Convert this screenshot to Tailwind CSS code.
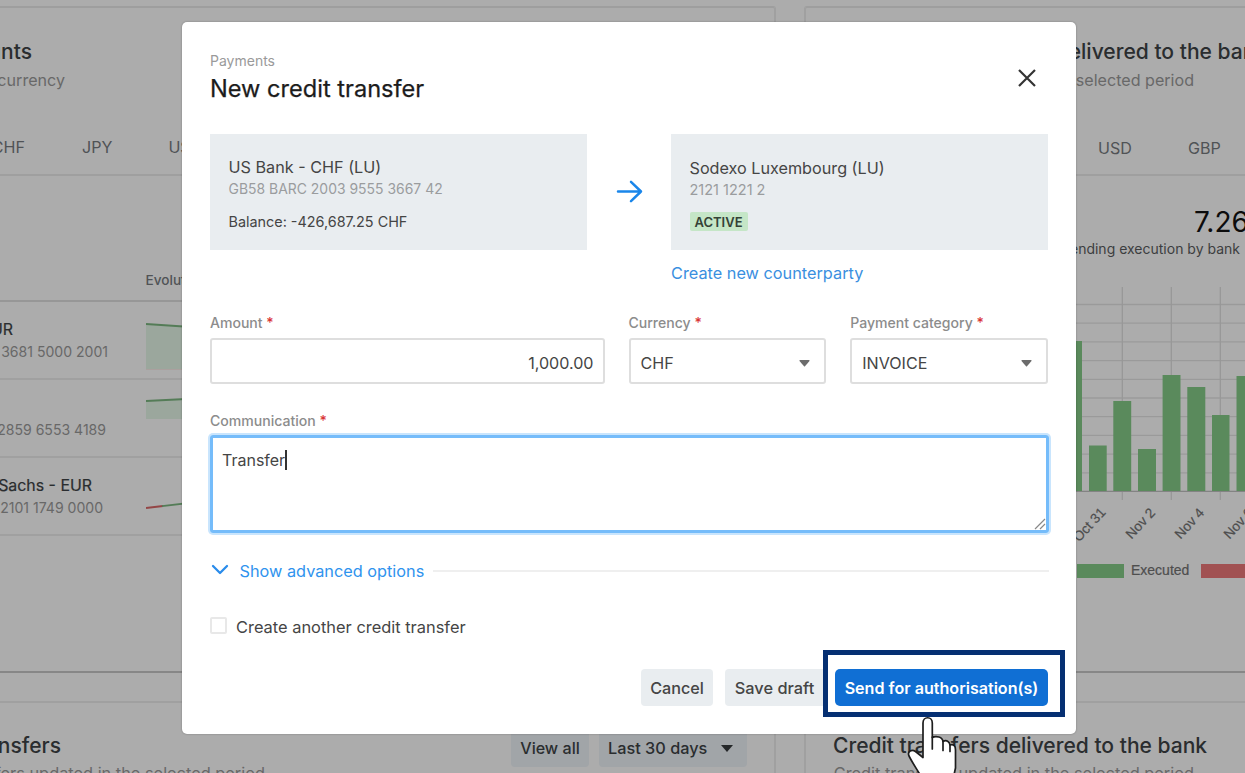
<!DOCTYPE html>
<html lang="en">
<head>
<meta charset="utf-8">
<title>New credit transfer</title>
<script src="https://cdn.jsdelivr.net/npm/@tailwindcss/browser@4"></script>
</head>
<body class="bg-[#acacac] font-['Inter','Liberation_Sans',sans-serif]">
<div class="relative w-[1245px] h-[773px] overflow-hidden bg-[#acacac] text-[#2a2d2f] text-[16.1px] whitespace-nowrap">

  <!-- Dashboard behind the dialog -->
  <main class="grid grid-cols-[776px_441px] gap-x-7 gap-y-7 pt-[6px]">

    <section class="flex h-[667px] flex-col border-t-2 border-r-2 border-b-2 border-t-[#9e9e9e] border-r-[#a0a0a0] border-b-[#878787] rounded-r-[3px]">
      <div class="mt-[30px] flex w-8 justify-end text-[21px] leading-[27px] font-medium">Accounts</div>
      <div class="mt-[3px] flex w-[65px] justify-end leading-6 text-[#686868]">Balance by currency</div>
      <div class="mt-[42px] flex h-[42px] border-b-2 border-[#9f9f9f] leading-[27px] text-[#505356]">
        <span class="flex w-[25px] justify-end">CHF</span><span class="ml-[57px]">JPY</span><span class="ml-[56px]">USD</span>
      </div>
      <div class="flex h-[126px] items-end border-b-2 border-[#979797] pb-[9px] pl-[145.5px] text-[13.6px] leading-[22px] font-medium text-[#505356]">Evolution</div>
      <div class="flex h-[78px] border-b-2 border-[#a0a0a0]">
        <div class="flex w-[146px] flex-col items-end pt-[17px] leading-[22px]"><span class="pr-[133px] text-[15.9px] [-webkit-text-stroke:0.2px_#2a2d2f]">Main account - EUR</span><span class="pr-[38px] text-[14.05px] text-[#686868]">BE12 3681 5000 2001</span></div>
        <svg class="w-[60px]" height="78" viewBox="0 0 60 78" fill="none"><path d="M0 22L60 26V67H0Z" fill="#9ba79d"/><path d="M0 67.500H60" stroke="#aaa09e"/><path d="M0 22L60 26" stroke="#547c57" stroke-width="1.800"/></svg>
      </div>
      <div class="flex h-[78px] border-b-2 border-[#a0a0a0]">
        <div class="flex w-[146px] flex-col items-end pt-[17px] leading-[22px]"><span class="pr-[146px]">ING</span><span class="pr-[40px] text-[14.05px] text-[#686868]">NL22 2859 6553 4189</span></div>
        <svg class="w-[60px]" height="78" viewBox="0 0 60 78" fill="none"><path d="M0 21L60 18V39H0Z" fill="#9ba79d"/><path d="M0 21L60 18" stroke="#547c57" stroke-width="1.800"/></svg>
      </div>
      <div class="flex h-[78px] border-b-2 border-[#a0a0a0]">
        <div class="flex w-[146px] flex-col items-end pt-[17px] leading-[22px]"><span class="pr-[54px] text-[15.9px] [-webkit-text-stroke:0.2px_#2a2d2f]">Goldman Sachs - EUR</span><span class="pr-[43px] text-[14.05px] text-[#686868]">DE31 2101 1749 0000</span></div>
        <svg class="w-[60px]" height="78" viewBox="0 0 60 78" fill="none" stroke-width="1.800"><path d="M0 50L17 48" stroke="#944646"/><path d="M16 48.100L60 43" stroke="#547c57"/></svg>
      </div>
    </section>

    <section class="flex h-[667px] flex-col border-t-2 border-l-2 border-b-2 border-t-[#9e9e9e] border-l-[#a0a0a0] border-b-[#878787] rounded-l-[3px]">
      <div class="mt-[30px] pl-[87px] text-[21.05px] leading-[27px] font-medium">Credit transfers delivered to the bank</div>
      <div class="mt-[3px] flex w-[388px] justify-end leading-6 text-[#686868]">Credit transfers updated in the selected period</div>
      <div class="mt-[43px] flex h-[41px] border-b-2 border-[#9f9f9f] pl-[292px] leading-[27px] text-[#505356]">
        <span>USD</span><span class="ml-[56px]">GBP</span>
      </div>
      <div class="mt-[27px] pl-[388px] text-[28px] leading-[38px] text-[#0c0c0d]">7.26M</div>
      <div class="flex w-[434px] justify-end text-[14px] leading-[16px] text-[#3c3e40]">Pending execution by bank</div>
      <!-- Daily volumes -->
      <svg class="mt-[30px] ml-[254px] block shrink-0" width="185" height="295" viewBox="1060 287 185 295" fill="none">
        <path d="M1060 304.500H1245M1060 323.200H1245M1060 341.900H1245M1060 360.600H1245M1060 379.300H1245M1060 398H1245M1060 416.700H1245M1060 435.400H1245M1060 454.100H1245M1060 472.800H1245" stroke="#9a9a9a" stroke-width="1.300"/>
        <path d="M1122.300 287V500M1171.300 287V500M1220.300 287V500" stroke="#989898" stroke-width="1.300"/>
        <path d="M1060 491.300H1245" stroke="#838383" stroke-width="1.300"/>
        <path d="M1064 341H1082V491H1064ZM1089 445.500H1106.700V491H1089ZM1113.300 401H1131.200V491H1113.300ZM1138 449H1156V491H1138ZM1162.600 375H1180.500V491H1162.600ZM1187.300 387H1205.300V491H1187.300ZM1212 415H1229.500V491H1212ZM1236.500 376H1254V491H1236.500Z" fill="#5a8a5c"/>
        <g font-family="Liberation Sans, sans-serif" font-size="13.700" fill="#4e4e4e" stroke="#4e4e4e" stroke-width="0.200" text-anchor="end">
          <text transform="translate(1106.500 513) rotate(-47)">Oct 31</text>
          <text transform="translate(1156 513.500) rotate(-47)">Nov 2</text>
          <text transform="translate(1205 513.500) rotate(-47)">Nov 4</text>
          <text transform="translate(1254 513.500) rotate(-47)">Nov 6</text>
          <text x="1131" y="574.500" font-size="14" text-anchor="start">Executed</text>
        </g>
        <path d="M1077 564H1124V578H1077Z" fill="#5a8a5c"/><path d="M1201 564H1260V578H1201Z" fill="#a15152"/>
      </svg>
    </section>

    <section class="flex h-[120px] border-t-2 border-r-2 border-[#a0a0a0] rounded-tr-[3px]">
      <div class="flex w-[265px] flex-col items-end pt-[29px]">
        <div class="pr-[204px] text-[21px] leading-[27px] font-medium">Credit transfers</div>
        <div class="mt-[2px] text-[16.35px] leading-6 text-[#686868]">Credit transfers updated in the selected period</div>
      </div>
      <div class="ml-auto flex gap-[10px] pt-[26px] pr-[27px] font-medium leading-[39px]">
        <div class="h-[38px] w-[78px] rounded bg-[#a1a5a8] text-center">View all</div>
        <div class="flex h-[38px] w-[148px] items-center rounded bg-[#a1a5a8] pl-[9px] text-[16.3px]">Last 30 days<svg class="ml-[14px]" width="12" height="7" viewBox="0 0 12 7"><path d="M0 0H12L6 7Z" fill="#25282a"/></svg></div>
      </div>
    </section>

    <section class="h-[120px] border-t-2 border-l-2 border-[#a0a0a0] rounded-tl-[3px] pt-[29px]">
      <div class="pl-[27px] text-[21.05px] leading-[27px] font-medium">Credit transfers delivered to the bank</div>
      <div class="mt-[2px] flex w-[388px] justify-end text-[16.35px] leading-6 text-[#686868]">Credit transfers updated in the selected period</div>
    </section>
  </main>

  <!-- Dialog -->
  <div class="absolute top-[22px] left-[182px] flex h-[712px] w-[894px] flex-col rounded-[5px] bg-white px-7 text-[#454545] shadow-[0_0_2px_#0005]">
    <div class="mt-[29px] flex h-[56px] justify-between">
      <div>
        <div class="text-[14px] leading-5 text-[#9a9a9a]">Payments</div>
        <div class="text-[23.6px] leading-[36px] text-[#1c1c1c] [-webkit-text-stroke:0.25px_#1c1c1c]">New credit transfer</div>
      </div>
      <svg class="mt-[17px] mr-[11px]" width="20" height="20" viewBox="0 0 20 20" fill="none" stroke="#333" stroke-width="2.200"><path d="M2 2L18 18M18 2L2 18"/></svg>
    </div>

    <div class="mt-[27px] flex h-[116px] items-stretch">
      <div class="w-[377px] bg-[#e9edf0] pt-[23px] pl-[18.5px]">
        <div class="text-[16.2px] leading-5">US Bank - CHF (LU)</div>
        <div class="text-[13.95px] leading-[23px] text-[#9a9c9e]">GB58 BARC 2003 9555 3667 42</div>
        <div class="mt-3 text-[14.4px] leading-5">Balance: -426,687.25 CHF</div>
      </div>
      <div class="flex w-[84px] items-center justify-center">
        <svg width="27" height="24" viewBox="0 0 27 24" fill="none" stroke="#1a86ea" stroke-width="2.500" stroke-linecap="round" stroke-linejoin="round"><path d="M2 11.500H25M15 1.800L25 11.500L15 21.200"/></svg>
      </div>
      <div class="w-[377px] bg-[#e9edf0] pt-[24px] pl-[18.5px]">
        <div class="text-[16.2px] leading-5">Sodexo Luxembourg (LU)</div>
        <div class="text-[14.5px] leading-[23px] text-[#9a9c9e]">2121 1221 2</div>
        <div class="mt-[11px] h-[19px] w-[58px] rounded-[2px] bg-[#c5e6c7] text-center text-[13px] leading-[20px] font-semibold text-[#344236]">ACTIVE</div>
      </div>
    </div>
    <div class="mt-3 pl-[461px] text-[16.3px] leading-[22px] text-[#3a8fe0]">Create new counterparty</div>

    <div class="mt-[29px] flex gap-6">
      <div class="w-[395px]">
        <div class="text-[14.05px] leading-5 font-medium text-[#8c8c8c]">Amount <span class="text-[#d93636]">*</span></div>
        <div class="mt-[5px] flex h-[46px] items-center justify-end rounded-[3px] border-2 border-[#dedede] pt-[4px] pr-[9px]">1,000.00</div>
      </div>
      <div class="w-[198px]">
        <div class="text-[14.05px] leading-5 font-medium text-[#8c8c8c]">Currency <span class="text-[#d93636]">*</span></div>
        <div class="mt-[5px] flex h-[46px] items-center justify-between rounded-[3px] border-2 border-[#dedede] pt-[4px] pr-[14px] pl-[10px]">CHF<svg width="11" height="7" viewBox="0 0 11 7"><path d="M1 0H10Q11 0.300 10.500 1L6 6.200Q5.500 6.700 5 6.200L0.500 1Q0 0.300 1 0Z" fill="#6c6c6c"/></svg></div>
      </div>
      <div class="w-[198px]">
        <div class="text-[14.05px] leading-5 font-medium text-[#8c8c8c]">Payment category <span class="text-[#d93636]">*</span></div>
        <div class="mt-[5px] flex h-[46px] items-center justify-between rounded-[3px] border-2 border-[#dedede] pt-[4px] pr-[14px] pl-[10px]">INVOICE<svg width="11" height="7" viewBox="0 0 11 7"><path d="M1 0H10Q11 0.300 10.500 1L6 6.200Q5.500 6.700 5 6.200L0.500 1Q0 0.300 1 0Z" fill="#6c6c6c"/></svg></div>
      </div>
    </div>

    <div class="mt-[27px] text-[14.05px] leading-5 font-medium text-[#8c8c8c]">Communication <span class="text-[#d93636]">*</span></div>
    <div class="mt-1 flex h-[98px] w-[839px] justify-between rounded-[3px] border-[3px] border-[#75bcfa] pl-[9px] text-[16px] leading-5 shadow-[0_0_0_2px_#c9e5fd]">
      <div class="flex pt-[12px]"><span>Transfer</span><span class="h-[20px] w-[1.500px] bg-[#333]"></span></div>
      <svg class="self-end" width="12" height="12" viewBox="0 0 12 12" stroke="#888" stroke-width="1.200"><path d="M1 11L11 1M6 11L11 6"/></svg>
    </div>

    <div class="mt-[27px] flex h-[22px] items-center">
      <svg class="mr-[10.5px] ml-[1px] -mt-[4px]" width="18" height="11" viewBox="0 0 18 11" fill="none" stroke="#2a8ceb" stroke-width="2.300" stroke-linecap="round" stroke-linejoin="round"><path d="M2 2L9 9L16 2"/></svg>
      <span class="text-[16.3px] leading-[22px] text-[#2f93ee]">Show advanced options</span>
      <span class="-mt-[1px] mr-[-1px] ml-[9px] h-[2px] flex-1 bg-[#efefef]"></span>
    </div>

    <div class="mt-[34px] flex h-[21px] items-center">
      <span class="-mt-[2px] h-[17px] w-[17px] rounded-[2px] border-2 border-[#e8e8e8]"></span>
      <span class="ml-[9px] text-[16.42px] leading-[22px]">Create another credit transfer</span>
    </div>

    <div class="mt-8 flex h-[37px] justify-end text-center leading-[39px] font-medium">
      <div class="mr-3 w-[72px] rounded bg-[#e9edf0] text-[16.2px]">Cancel</div>
      <div class="w-[98px] rounded-l bg-[#e9edf0] pl-[1px] text-[16.35px]">Save draft</div>
      <div class="ml-[12px] w-[213px] rounded-[5px] bg-[#106fd4] font-semibold text-white">Send for authorisation(s)</div>
    </div>
  </div>

  <!-- Highlight frame and pointer -->
  <div class="absolute top-[650px] left-[823px] h-[67px] w-[242px] border-[5.500px] border-[#052f72]"></div>
  <svg class="absolute top-[715px] left-[904px]" width="56" height="58" viewBox="904 715 56 58" fill="#fff" stroke="#1d1d1d" stroke-width="1.700" stroke-linejoin="round" stroke-linecap="round">
    <path d="M925 784C920 773 914 766 909 756C907 751 912 749 915.500 751.500L923 757.500V723C923 716 932.300 716 932.300 723V737.500C936 735.500 942.500 737 943 741.500C946.500 739.500 949.500 741.500 950 745C953.500 743.500 955.500 746 955.500 750V768L952 784Z"/>
    <path d="M932.300 737V749M943 741V750.500M950 745V751.500" fill="none"/>
  </svg>
</div>
</body>
</html>
